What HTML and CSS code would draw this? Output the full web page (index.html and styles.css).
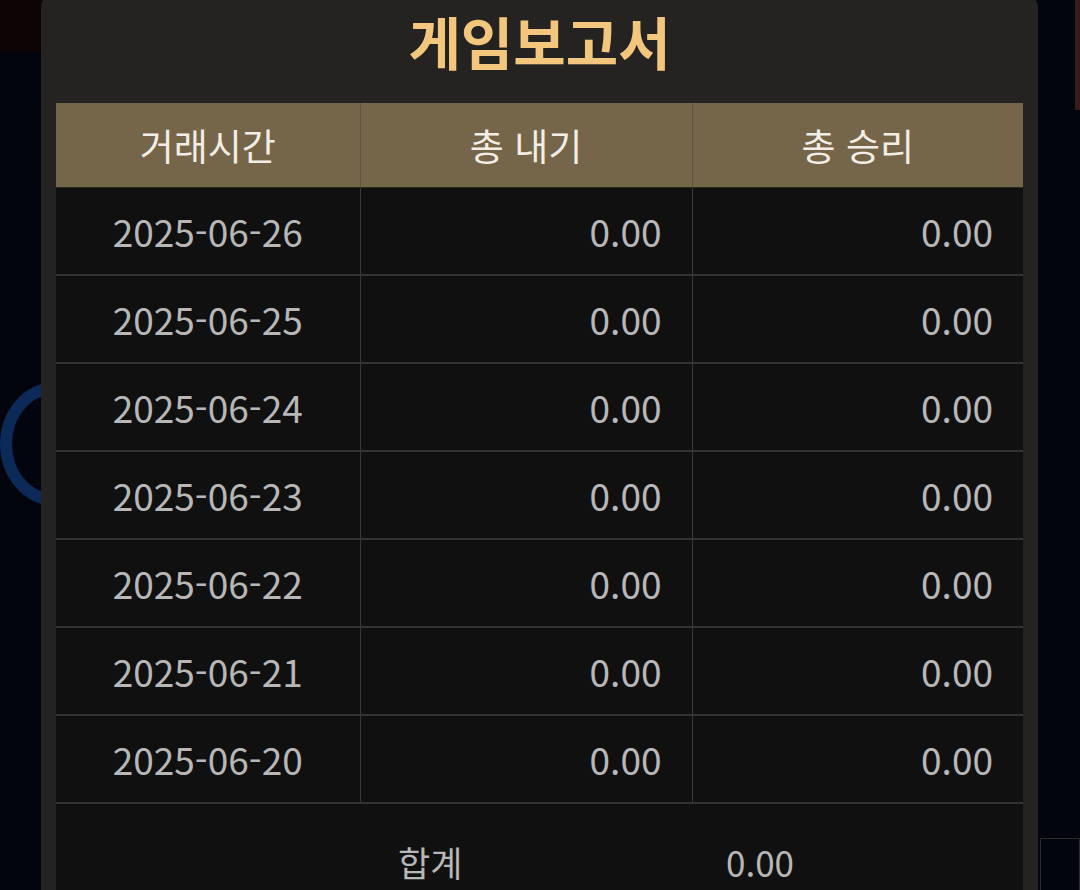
FILE: index.html
```html
<!DOCTYPE html>
<html lang="ko">
<head>
<meta charset="utf-8">
<title>게임보고서</title>
<link rel="stylesheet" href="styles.css">
</head>
<body>
<div class="backdrop">
  <div class="bg-top"></div>
  <div class="bg-ring"></div>
  <div class="bg-red"></div>
  <div class="bg-box"></div>
</div>
<div class="modal">
  <h1 class="title">게임보고서</h1>
  <table class="report">
    <colgroup>
      <col class="c1"><col class="c2"><col class="c3">
    </colgroup>
    <thead>
      <tr><th>거래시간</th><th>총 내기</th><th>총 승리</th></tr>
    </thead>
    <tbody>
      <tr><td class="date">2025-06-26</td><td class="num">0.00</td><td class="num">0.00</td></tr>
      <tr><td class="date">2025-06-25</td><td class="num">0.00</td><td class="num">0.00</td></tr>
      <tr><td class="date">2025-06-24</td><td class="num">0.00</td><td class="num">0.00</td></tr>
      <tr><td class="date">2025-06-23</td><td class="num">0.00</td><td class="num">0.00</td></tr>
      <tr><td class="date">2025-06-22</td><td class="num">0.00</td><td class="num">0.00</td></tr>
      <tr><td class="date">2025-06-21</td><td class="num">0.00</td><td class="num">0.00</td></tr>
      <tr><td class="date">2025-06-20</td><td class="num">0.00</td><td class="num">0.00</td></tr>
    </tbody>
  </table>
  <div class="total">
    <span class="total-label">합계</span>
    <span class="total-value">0.00</span>
  </div>
</div>
</body>
</html>
```

FILE: styles.css
```css
html, body {
  margin: 0;
  padding: 0;
}
body {
  width: 1080px;
  height: 890px;
  overflow: hidden;
  background: #03050e;
  font-family: "Noto Sans CJK KR", "Noto Sans", sans-serif;
  position: relative;
}
.backdrop {
  position: absolute;
  inset: 0;
  z-index: 0;
}
.bg-top {
  position: absolute;
  left: 0; top: 0;
  width: 45px; height: 52px;
  background: #0c0405;
}
.bg-ring {
  position: absolute;
  left: 0; top: 382px;
  width: 110px; height: 124px;
  border-radius: 50%;
  border: 12px solid #0b2a58;
  box-sizing: border-box;
}
.bg-red {
  position: absolute;
  left: 1075px; top: 0;
  width: 5px; height: 110px;
  background: #3a1a14;
}
.bg-box {
  position: absolute;
  left: 1040px; top: 838px;
  width: 40px; height: 60px;
  border: 1px solid #2a2a2a;
  box-sizing: border-box;
}
.modal {
  position: relative;
  z-index: 1;
  margin-left: 41px;
  margin-top: -8px;
  width: 997px;
  height: 920px;
  box-sizing: border-box;
  padding: 8px 15px 0;
  background: #252321;
  border-radius: 16px 16px 0 0;
}
.title {
  margin: 0;
  height: 103px;
  display: flex;
  align-items: center;
  justify-content: center;
  padding-bottom: 22px;
  box-sizing: border-box;
  font-size: 57px;
  line-height: 1;
  font-weight: 700;
  color: #f3c67d;
  letter-spacing: 0;
}
.report {
  width: 967px;
  border-collapse: collapse;
  table-layout: fixed;
  background: #101010;
}
.c1 { width: 304px; }
.c2 { width: 332px; }
.c3 { width: 331px; }
.report th {
  height: 84px;
  padding: 0;
  background: #766649;
  color: #f2eee6;
  font-size: 37px;
  font-weight: 400;
  text-align: center;
  border-left: 1px solid #5e523c;
  border-bottom: 1px solid #2e2820;
}
.report th:first-child { border-left: none; }
.report td {
  height: 86px;
  padding: 0 30px;
  color: #b7b7b7;
  font-size: 37px;
  border-left: 1px solid #3a3a3a;
  border-bottom: 2px solid #333333;
}
.report td:first-child { border-left: none; }
.report td.date { text-align: center; padding: 0; }
.report td.num { text-align: right; }
.total {
  width: 967px;
  height: 116px;
  background: #101010;
  display: flex;
  align-items: center;
  box-sizing: border-box;
  padding-left: 342px;
  color: #b7b7b7;
  font-size: 35px;
  line-height: 1.2;
}
.total-label { width: 328px; }
.total-value { font-size: 35px; }
```
